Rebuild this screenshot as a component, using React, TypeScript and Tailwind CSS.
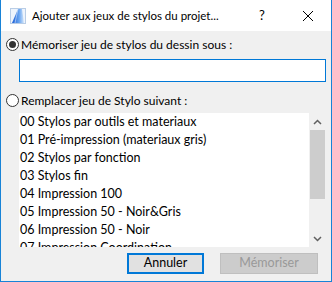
import React from 'react'

const ITEMS = [
  '00 Stylos par outils et materiaux',
  '01 Pré-impression (materiaux gris)',
  '02 Stylos par fonction',
  '03 Stylos fin',
  '04 Impression 100',
  '05 Impression 50 - Noir&Gris',
  '06 Impression 50 - Noir',
  '07 Impression Coordination',
]

function AppIcon() {
  return (
    <svg width="16" height="16" viewBox="0 0 16 16">
      <defs>
        <linearGradient id="lg" x1="0" y1="0" x2="1" y2="0">
          <stop offset="0" stopColor="#1c5fd6" />
          <stop offset="0.6" stopColor="#6aa6f0" />
          <stop offset="1" stopColor="#d4e6fb" />
        </linearGradient>
      </defs>
      <rect x="0.5" y="0.5" width="15" height="15" fill="#eef4fc" stroke="#b9cde6" />
      <path d="M2 15 L8 1 L12 1 L14 15 Z" fill="url(#lg)" />
      <path d="M8 1 L5 15" stroke="#ffffff" strokeWidth="0.8" opacity="0.6" />
    </svg>
  )
}

function Radio({ checked }: { checked?: boolean }) {
  return (
    <span className="relative flex h-[13px] w-[13px] shrink-0 items-center justify-center rounded-full border border-[#333] bg-white">
      {checked && <span className="h-[7px] w-[7px] rounded-full bg-[#333]" />}
    </span>
  )
}

export default function App() {
  return (
    <div
      className="flex h-[282px] w-[332px] flex-col border-x border-b border-[#1883d7] bg-[#f0f0f0] text-[12px] text-black"
      style={{ fontFamily: 'Lato, "Noto Sans", sans-serif' }}
    >
      {/* title bar */}
      <div className="flex h-[31px] shrink-0 items-center bg-white pl-[9px]">
        <AppIcon />
        <span className="ml-[6px] whitespace-nowrap text-[11.5px] text-black">Ajouter aux jeux de stylos du projet...</span>
        <span className="ml-auto w-[46px] shrink-0 text-center text-[13px]">?</span>
        <span className="flex w-[46px] shrink-0 justify-center">
          <svg width="10" height="10" viewBox="0 0 10 10">
            <path d="M0 0 L10 10 M10 0 L0 10" stroke="#000" strokeWidth="1" />
          </svg>
        </span>
      </div>

      <div className="flex flex-1 flex-col px-[5px]">
        <label className="mt-[7px] flex items-center gap-[2px]">
          <Radio checked />
          <span className="text-[12px] leading-[13px]">Mémoriser jeu de stylos du dessin sous :</span>
        </label>

        <div className="ml-[13px] mt-[8px] h-[23px] border border-[#0078d7] bg-white" />

        <label className="mt-[12px] flex items-center gap-[2px]">
          <Radio />
          <span className="text-[12px] leading-[13px]">Remplacer jeu de Stylo suivant :</span>
        </label>

        <div className="ml-[13px] mt-[6px] flex h-[134px] bg-white">
          <div className="flex-1 overflow-hidden pl-[1px] text-[12.5px]">
            {ITEMS.map(it => (
              <div key={it} className="h-[18px] whitespace-nowrap leading-[18px]">{it}</div>
            ))}
          </div>
          <div className="flex w-[17px] flex-col bg-[#f0f0f0]">
            <div className="flex h-[17px] items-center justify-center">
              <svg width="9" height="6" viewBox="0 0 9 6">
                <path d="M1 5 L4.5 1.5 L8 5" stroke="#606060" strokeWidth="1.5" fill="none" />
              </svg>
            </div>
            <div className="mx-[1px] h-[69px] bg-[#cdcdcd]" />
            <div className="flex-1" />
            <div className="flex h-[17px] items-center justify-center">
              <svg width="9" height="6" viewBox="0 0 9 6">
                <path d="M1 1 L4.5 4.5 L8 1" stroke="#606060" strokeWidth="1.5" fill="none" />
              </svg>
            </div>
          </div>
        </div>

        <div className="mt-[6px] flex justify-end gap-[16px] pr-[8px]">
          <button className="h-[21px] w-[77px] border-2 border-[#0078d7] bg-[#e1e1e1] text-[12.5px] leading-none">
            Annuler
          </button>
          <button className="h-[21px] w-[98px] border border-[#bfbfbf] bg-[#cccccc] text-[12.5px] leading-none text-[#999999]">
            Mémoriser
          </button>
        </div>
      </div>
    </div>
  )
}
